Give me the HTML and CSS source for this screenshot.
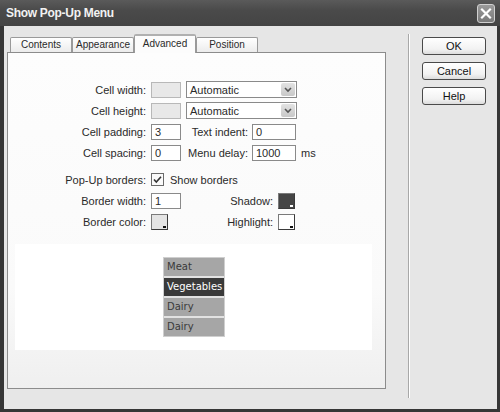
FILE: index.html
```html
<!DOCTYPE html>
<html>
<head>
<meta charset="utf-8">
<link rel="stylesheet" href="styles.css">
</head>
<body>
<div class="window">
  <div class="titlebar">
    <span class="title">Show Pop-Up Menu</span>
    <span class="close">
      <svg width="18" height="19" viewBox="0 0 18 19"><path d="M5 5.5 L13 13.5 M13 5.5 L5 13.5" stroke="#fff" stroke-width="2.2" stroke-linecap="square"/></svg>
    </span>
  </div>
  <div class="client">
    <div class="left">
      <div class="tabs">
        <div class="tab">Contents</div>
        <div class="tab">Appearance</div>
        <div class="tab active">Advanced</div>
        <div class="tab">Position</div>
      </div>
      <div class="panel">
        <div class="form">
          <div class="row">
            <span class="lbl">Cell width:</span>
            <span class="input disabled"></span>
            <span class="select"><span class="sel-text">Automatic</span><span class="arrow"><svg width="14" height="13" viewBox="0 0 14 13"><path d="M4 5 L7 8 L10 5" fill="none" stroke="#555" stroke-width="1.6"/></svg></span></span>
          </div>
          <div class="row">
            <span class="lbl">Cell height:</span>
            <span class="input disabled"></span>
            <span class="select"><span class="sel-text">Automatic</span><span class="arrow"><svg width="14" height="13" viewBox="0 0 14 13"><path d="M4 5 L7 8 L10 5" fill="none" stroke="#555" stroke-width="1.6"/></svg></span></span>
          </div>
          <div class="row">
            <span class="lbl">Cell padding:</span>
            <span class="input">3</span>
            <span class="lbl2">Text indent:</span>
            <span class="input wide">0</span>
          </div>
          <div class="row">
            <span class="lbl">Cell spacing:</span>
            <span class="input">0</span>
            <span class="lbl2">Menu delay:</span>
            <span class="input wide">1000</span>
            <span class="unit">ms</span>
          </div>
          <div class="row gap-top">
            <span class="lbl">Pop-Up borders:</span>
            <span class="check"><svg width="13" height="13" viewBox="0 0 13 13"><path d="M3 6.5 L5.3 9 L10 3.8" fill="none" stroke="#333" stroke-width="1.6"/></svg></span>
            <span class="check-text">Show borders</span>
          </div>
          <div class="row">
            <span class="lbl">Border width:</span>
            <span class="input">1</span>
            <span class="lbl3">Shadow:</span>
            <span class="swatch dark"></span>
          </div>
          <div class="row">
            <span class="lbl">Border color:</span>
            <span class="swatch light"></span>
            <span class="lbl4">Highlight:</span>
            <span class="swatch white"></span>
          </div>
        </div>
        <div class="preview">
          <div class="menu">
            <div class="item">Meat</div>
            <div class="item on">Vegetables</div>
            <div class="item">Dairy</div>
            <div class="item">Dairy</div>
          </div>
        </div>
      </div>
    </div>
    <div class="sep"></div>
    <div class="buttons">
      <div class="btn">OK</div>
      <div class="btn">Cancel</div>
      <div class="btn">Help</div>
    </div>
  </div>
</div>
</body>
</html>
```
FILE: styles.css
```css
html, body {
  margin: 0;
  padding: 0;
}
body {
  font-family: "Liberation Sans", Arial, sans-serif;
  font-size: 11px;
  color: #2a2a2a;
}
.window {
  width: 500px;
  height: 412px;
  box-sizing: border-box;
  background: #363636;
  display: flex;
  flex-direction: column;
}
.titlebar {
  height: 26px;
  flex: none;
  display: flex;
  align-items: center;
  justify-content: space-between;
  padding-left: 6px;
  padding-right: 5px;
  background: linear-gradient(#5a5a5a, #4a4a4a 40%, #444);
}
.title {
  color: #f2f2f2;
  font-weight: bold;
  font-size: 12px;
  letter-spacing: -0.3px;
}
.close {
  width: 18px;
  height: 19px;
  box-sizing: border-box;
  border: 1px solid #d0d0d0;
  border-radius: 3px;
  background: linear-gradient(#9a9a9a, #7a7a7a);
  display: flex;
}
.close svg {
  margin: -1px;
}
.client {
  flex: 1;
  margin: 0 3px 3px 4px;
  background: #e6e6e6;
  display: flex;
}
.left {
  padding: 8px 0 0 3px;
  display: flex;
  flex-direction: column;
}
.tabs {
  height: 18px;
  display: flex;
  align-items: flex-end;
  padding-left: 3px;
  position: relative;
  z-index: 1;
}
.tab {
  width: 62px;
  height: 15px;
  box-sizing: border-box;
  border: 1px solid #9a9a9a;
  border-bottom: none;
  border-radius: 2px 2px 0 0;
  background: linear-gradient(#ffffff, #ececec);
  text-align: center;
  font-size: 10px;
  line-height: 14px;
  color: #2a2a2a;
  white-space: nowrap;
  overflow: hidden;
}
.tab.active {
  height: 19px;
  margin-bottom: -1px;
  background: #fcfcfc;
  border-top: 2px solid #b0b0b0;
  line-height: 15px;
}
.panel {
  width: 379px;
  height: 337px;
  box-sizing: border-box;
  border: 1px solid #8c8c8c;
  background: linear-gradient(#fdfdfd, #fafafa 70%, #efefef);
  display: flex;
  flex-direction: column;
}
.form {
  padding-top: 28px;
  display: flex;
  flex-direction: column;
  gap: 4px;
}
.row {
  height: 17px;
  display: flex;
  align-items: center;
}
.row.gap-top {
  margin-top: 6px;
}
.lbl {
  width: 138px;
  text-align: right;
  margin-right: 5px;
}
.lbl2 {
  width: 67px;
  text-align: right;
  margin-right: 4px;
}
.lbl3 {
  width: 92px;
  text-align: right;
  margin-right: 5px;
}
.lbl4 {
  width: 105px;
  text-align: right;
  margin-right: 5px;
}
.input {
  width: 30px;
  height: 16px;
  box-sizing: border-box;
  border: 1px solid #8a8a8a;
  background: #fff;
  padding-left: 3px;
  line-height: 14px;
}
.input.disabled {
  background: #e8e8e8;
  border-color: #b8b8b8;
}
.input.wide {
  width: 44px;
}
.unit {
  margin-left: 5px;
}
.select {
  margin-left: 5px;
  width: 111px;
  height: 17px;
  box-sizing: border-box;
  border: 1px solid #8a8a8a;
  background: #fff;
  display: flex;
  align-items: center;
  justify-content: space-between;
  padding: 0 1px 0 3px;
}
.arrow {
  width: 14px;
  height: 13px;
  border-radius: 2px;
  background: linear-gradient(#e2e2e2, #c8c8c8);
  display: flex;
}
.check {
  width: 13px;
  height: 13px;
  box-sizing: border-box;
  border: 1px solid #6a6a6a;
  background: #fafafa;
  display: flex;
}
.check svg {
  margin: -1px;
}
.check-text {
  margin-left: 6px;
}
.swatch {
  width: 17px;
  height: 16px;
  box-sizing: border-box;
  border: 1px solid #7a7a7a;
  border-right-color: #3a3a3a;
  border-bottom-color: #3a3a3a;
  position: relative;
}
.swatch::after {
  content: "";
  position: absolute;
  right: 1px;
  bottom: 1px;
  width: 3px;
  height: 2px;
  background: #111;
}
.swatch.dark {
  background: #454545;
}
.swatch.dark::after {
  background: #fff;
}
.swatch.light {
  background: #e4e4e4;
}
.swatch.white {
  background: #fff;
}
.preview {
  margin: 14px 0 0 7px;
  width: 357px;
  height: 106px;
  background: #fff;
  display: flex;
  align-items: center;
  justify-content: center;
}
.menu {
  width: 62px;
  box-sizing: border-box;
  border: 1px solid #cfcfcf;
  background: #e2e2e2;
  display: flex;
  flex-direction: column;
  gap: 2px;
  margin-left: 1px;
}
.item {
  height: 18px;
  background: #a6a6a6;
  font-family: "DejaVu Sans", Verdana, sans-serif;
  font-size: 10px;
  line-height: 18px;
  padding-left: 3px;
  color: #3a3a3a;
}
.item.on {
  background: #3a3a3a;
  color: #fff;
}
.sep {
  width: 2px;
  margin: 8px 0 11px 22px;
  border-left: 1px solid #a8a8a8;
  background: #fff;
  box-sizing: border-box;
}
.buttons {
  margin-left: 12px;
  padding-top: 11px;
  display: flex;
  flex-direction: column;
  gap: 7px;
}
.btn {
  width: 64px;
  height: 18px;
  box-sizing: border-box;
  border: 1px solid #4a4a4a;
  border-radius: 3px;
  background: linear-gradient(#ffffff, #f2f2f2 70%, #dcdcdc);
  text-align: center;
  line-height: 16px;
  color: #111;
}
```
